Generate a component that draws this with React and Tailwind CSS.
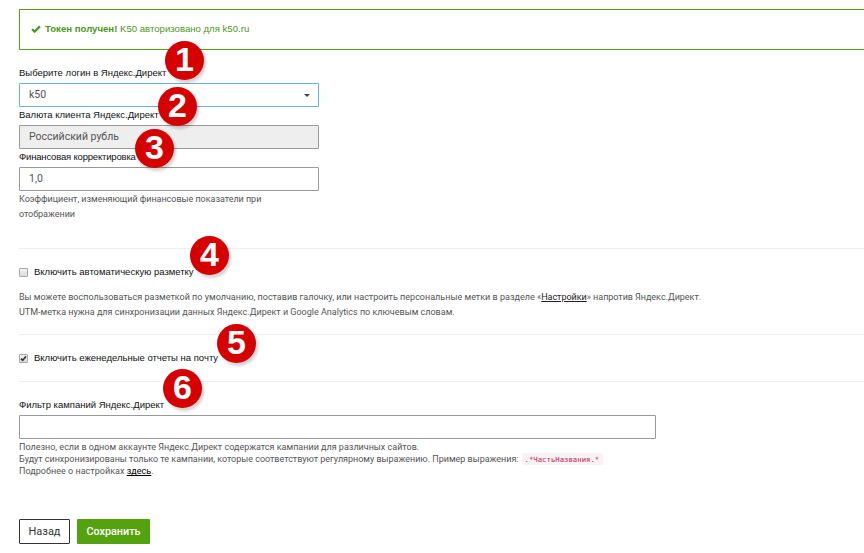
function Badge({ n, className }) {
  return (
    <span
      className={`absolute flex size-[39px] items-center justify-center rounded-full bg-[#d60000] pb-1 font-['Liberation_Sans',Arial,sans-serif] text-[34px] leading-none font-bold text-white shadow-[2px_3px_3px_rgba(0,0,0,0.18)] ${className}`}
    >
      {n}
    </span>
  );
}

function Label({ children, className = "" }) {
  return (
    <label className={`block h-[18px] font-['Liberation_Sans',Arial,sans-serif] text-[9.5px] leading-[16px] whitespace-nowrap text-[#111] ${className}`}>
      {children}
    </label>
  );
}

function Field({ children, className = "" }) {
  return (
    <div className={`flex h-6 items-center rounded-[1px] border px-[9px] pt-px text-[10.5px] leading-none whitespace-nowrap text-[#555] ${className}`}>
      {children}
    </div>
  );
}

function Check({ checked }) {
  return (
    <span className="relative block size-[9px] shrink-0 rounded-[1px] border border-[#a8a8a8] bg-linear-to-b from-[#f2f2f2] to-[#dcdcdc]">
      {checked && (
        <svg viewBox="0 0 9 9" className="absolute -top-px -left-px size-[9px]" fill="none" stroke="#333" strokeWidth="1.6">
          <path d="M2 4.6 3.7 6.4 7 2.2" />
        </svg>
      )}
    </span>
  );
}

export default function App() {
  return (
    <main className="relative h-[553px] w-[864px] overflow-hidden bg-white pt-[9px] pl-[19px] font-['Roboto','Liberation_Sans',sans-serif] text-[#555]">
      <div className="flex h-[41px] items-center rounded-l-[1px] border border-r-0 border-[#54a20e] pl-[11px] font-['Liberation_Sans',Arial,sans-serif] text-[9.6px] whitespace-nowrap text-[#4d961a]">
        <svg viewBox="0 0 10 8" className="mr-1 mb-0.5 h-2 w-2.5" fill="none" stroke="#3f9a1c" strokeWidth="2.2">
          <path d="M1 4.2 3.7 6.6 9 1.2" />
        </svg>
        <span>
          <b className="font-bold">Токен получен!</b> K50 авторизовано для k50.ru
        </span>
      </div>

      <section className="mt-[15px] w-[300px]">
        <Label>Выберите логин в Яндекс.Директ</Label>
        <Field className="justify-between border-[#66afe9]">
          <span>k50</span>
          <span className="-mr-px h-0 w-0 border-x-[3px] border-t-[3px] border-x-transparent border-t-[#444]" />
        </Field>
        <Label>Валюта клиента Яндекс.Директ</Label>
        <Field className="border-[#999] bg-[#eee]">Российский рубль</Field>
        <Label className="tracking-[-0.18px]">Финансовая корректировка</Label>
        <Field className="border-[#999]">1,0</Field>
        <p className="pt-px text-[9px] leading-[15px] tracking-[-0.03px] whitespace-nowrap">
          Коэффициент, изменяющий финансовые показатели при
          <br />
          отображении
        </p>
      </section>

      <hr className="mt-[26px] border-[#eee]" />

      <div className="mt-[15px] flex h-4 items-center gap-[6px] font-['Liberation_Sans',Arial,sans-serif] text-[9.5px] whitespace-nowrap text-[#111]">
        <Check />
        <span className="pt-px">Включить автоматическую разметку</span>
      </div>
      <p className="mt-[10px] text-[9px] leading-[15px] whitespace-nowrap">
        <span className="tracking-[0.01px]">
          Вы можете воспользоваться разметкой по умолчанию, поставив галочку, или настроить персональные метки в разделе «
        </span>
        <span className="tracking-[-0.03px]">
          <a className="text-[#222] underline">Настройки</a>» напротив Яндекс.Директ.
        </span>
        <br />
        UTM-метка нужна для синхронизации данных Яндекс.Директ и Google Analytics по ключевым словам.
      </p>

      <hr className="mt-[14px] border-[#eee]" />

      <div className="mt-[15px] flex h-4 items-center gap-[6px] font-['Liberation_Sans',Arial,sans-serif] text-[9.5px] whitespace-nowrap text-[#111]">
        <Check checked />
        <span className="pt-px">Включить еженедельные отчеты на почту</span>
      </div>

      <hr className="mt-[15px] border-[#eee]" />

      <section className="mt-[15px]">
        <Label>Фильтр кампаний Яндекс.Директ</Label>
        <Field className="w-[637px] border-[#999]" />
        <div className="mt-[2px] text-[9px] leading-3 whitespace-nowrap">
          <p>Полезно, если в одном аккаунте Яндекс.Директ содержатся кампании для различных сайтов.</p>
          <p className="flex h-3 items-center">
            <span className="tracking-[-0.018px]">
              Будут синхронизированы только те кампании, которые соответствуют регулярному выражению. Пример выражения:
            </span>
            <code className="ml-[3px] flex h-3 w-[81px] items-center rounded-[2px] bg-[#f9f2f4] px-[3px] pt-px font-['DejaVu_Sans_Mono',monospace] text-[7.3px] text-[#c7254e]">
              .*ЧастьНазвания.*
            </code>
          </p>
          <p className="tracking-[0.03px]">
            Подробнее о настройках <a className="text-black underline">здесь</a>.
          </p>
        </div>
      </section>

      <div className="mt-[42px] flex gap-[7px] text-[11px]">
        <button className="h-[25px] w-[51px] rounded-[1px] border border-[#333] pt-px text-[#333]">Назад</button>
        <button className="h-[25px] w-[73px] rounded-[1px] bg-[#54a20e] pt-px text-[10.8px] font-medium text-white">Сохранить</button>
      </div>

      <Badge n="1" className="top-[41px] left-[165px]" />
      <Badge n="2" className="top-[87px] left-[158px]" />
      <Badge n="3" className="top-[129px] left-[135px]" />
      <Badge n="4" className="top-[236px] left-[190px]" />
      <Badge n="5" className="top-[324px] left-[217px]" />
      <Badge n="6" className="top-[369px] left-[163px]" />
    </main>
  );
}
